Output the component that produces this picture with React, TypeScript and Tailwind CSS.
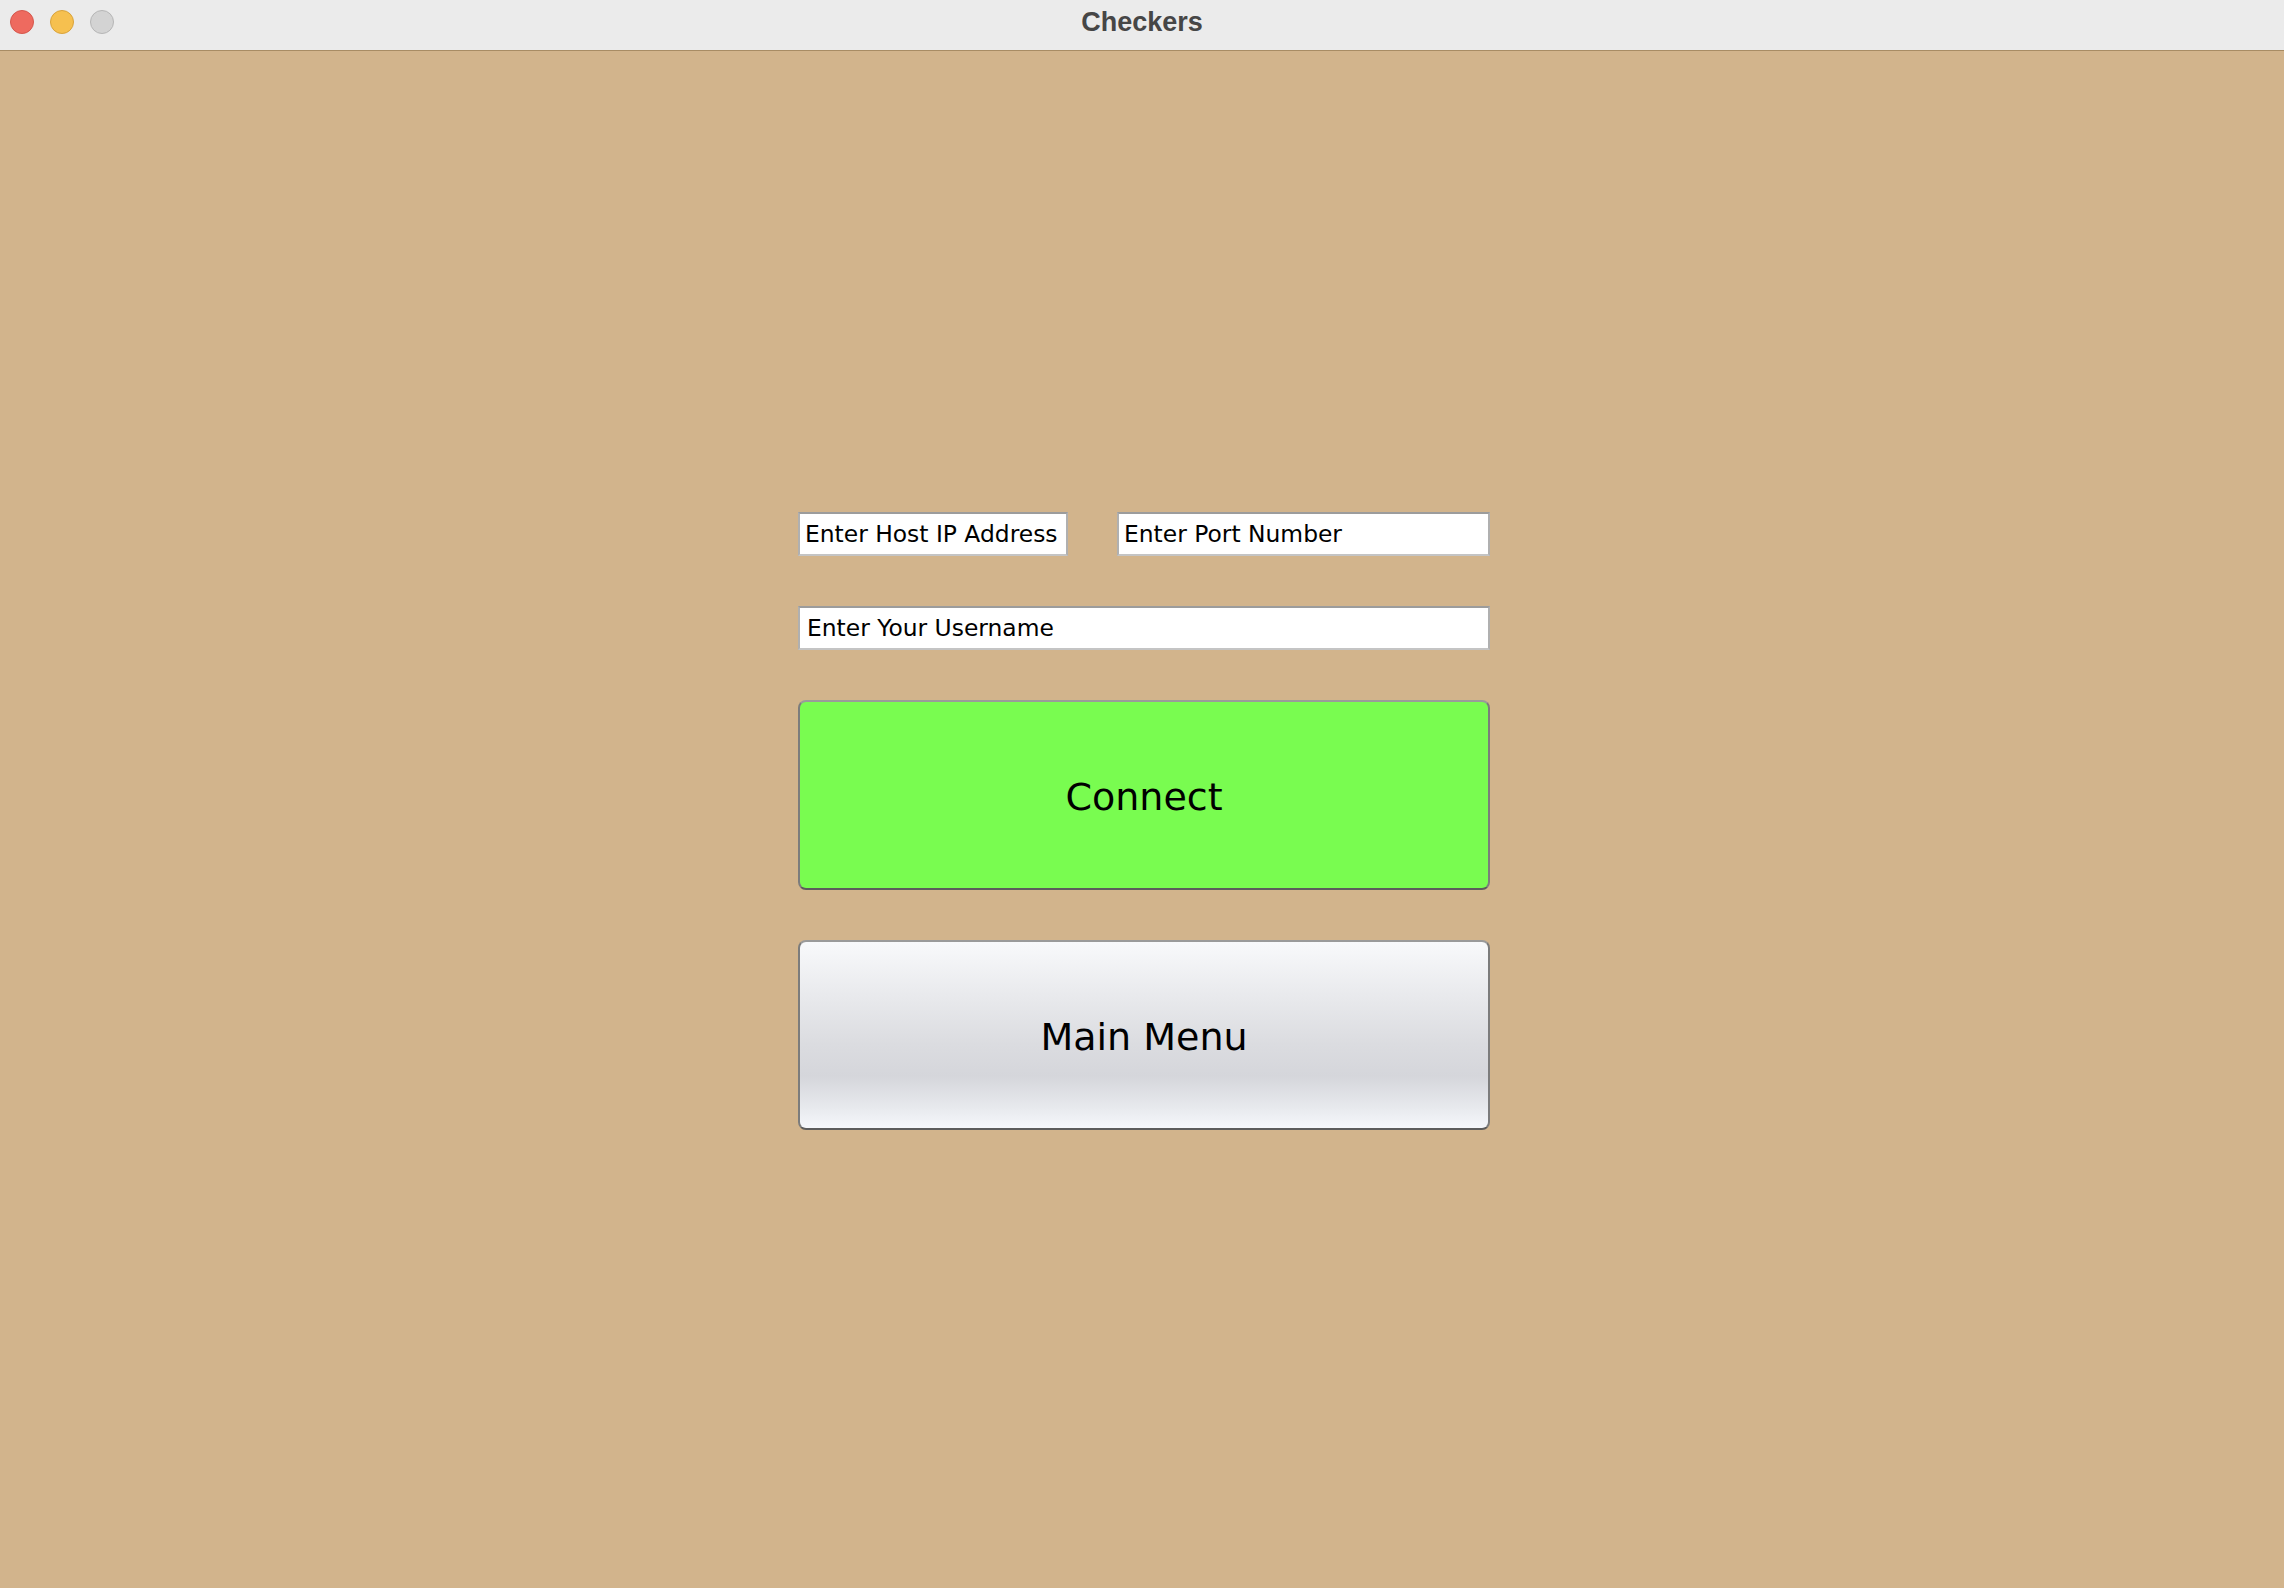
import React from 'react'

const field =
  'h-[44px] border-2 border-t-[#9c9c9c] border-x-[#b0b0b0] border-b-[#c4c4c4] bg-white px-[5px] text-[23.4px] text-black outline-none'

const btn =
  'h-[190px] w-full rounded-[8px] border-2 border-t-[#9a9a9a] border-x-[#7c7c7c] border-b-[#5c5c5c] pt-[4px] text-[38px] text-black'

export default function App() {
  return (
    <div className="min-h-screen flex flex-col bg-[#d2b48c]" style={{ fontFamily: '"DejaVu Sans", sans-serif' }}>
      <header className="relative h-[51px] shrink-0 bg-[#ebebeb] border-b border-[#a88c64] flex items-center justify-center">
        <div className="absolute left-[10px] top-[10px] flex gap-[16px]">
          <span className="w-[24px] h-[24px] rounded-full bg-[#ee6a5f] border border-[#d5574c]" />
          <span className="w-[24px] h-[24px] rounded-full bg-[#f6c04f] border border-[#d9a33b]" />
          <span className="w-[24px] h-[24px] rounded-full bg-[#d3d3d3] border border-[#b6b6b6]" />
        </div>
        <h1
          className="text-[27px] font-bold text-[#464646] -mt-[6px]"
          style={{ fontFamily: '"Liberation Sans", Arial, sans-serif' }}
        >
          Checkers
        </h1>
      </header>

      <main className="flex-1 flex items-center justify-center pl-[4px] pt-[3px]">
        <div className="w-[692px] flex flex-col gap-[50px]">
          <div className="flex gap-[49px]">
            <input className={field + ' w-[270px]'} defaultValue="Enter Host IP Address" />
            <input className={field + ' flex-1 min-w-0'} defaultValue="Enter Port Number" />
          </div>
          <input className={field + ' w-full px-[7px]'} defaultValue="Enter Your Username" />
          <button className={btn + ' bg-[#79fc50]'}>Connect</button>
          <button
            className={
              btn +
              ' bg-[linear-gradient(to_bottom,#f8f9fb_0%,#e8e9ec_30%,#dbdce0_55%,#d5d6db_72%,#e6e8ec_88%,#f5f7fb_100%)]'
            }
          >
            Main Menu
          </button>
        </div>
      </main>
    </div>
  )
}
